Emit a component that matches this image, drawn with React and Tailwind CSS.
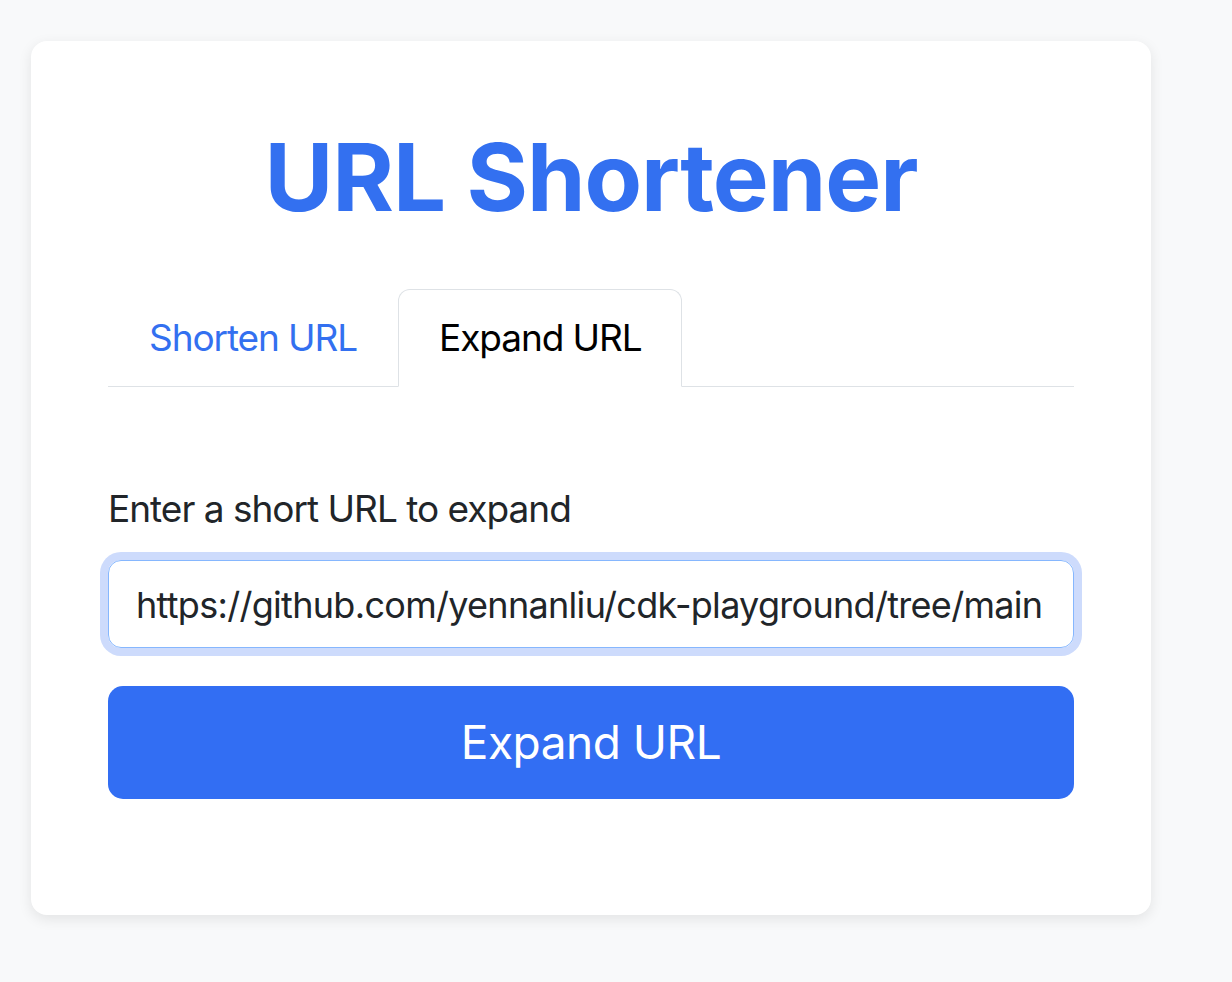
import React, { useEffect, useRef, useState } from "react";

function App() {
  const [tab, setTab] = useState("expand");
  const [url, setUrl] = useState("https://github.com/yennanliu/cdk-playground/tree/main");
  const inputRef = useRef(null);

  // focus the field and put the caret after the text
  useEffect(() => {
    const el = inputRef.current;
    if (!el) return;
    el.focus();
    el.setSelectionRange(el.value.length, el.value.length);
  }, []);

  return (
    <div className="min-h-screen bg-[#f8f9fa] pt-[41px] pl-[31px] font-['Inter','Noto_Sans',sans-serif]">
      <div className="w-[1120px] h-[874px] bg-white rounded-[16px] shadow-[0_4px_14px_rgba(0,0,0,0.09)] px-[77px] pt-[80px]">
        {/* Title */}
        <h1 className="text-center text-[94px] leading-[1.2] font-bold text-[#3370f0] tracking-[-1px]">
          URL Shortener
        </h1>

        {/* Tabs */}
        <div className="mt-[55px] flex border-b border-[#dee2e6]">
          <button
            className={
              tab === "shorten"
                ? "-mb-px px-[40px] py-[18px] text-[37px] leading-[60px] tracking-[-1.1px] border border-[#dee2e6] border-b-white rounded-t-[12px] bg-white text-black"
                : "-mb-px px-[40px] py-[18px] text-[37px] leading-[60px] tracking-[-1.1px] border border-transparent text-[#3370f0]"
            }
            onClick={() => setTab("shorten")}
          >
            Shorten URL
          </button>
          <button
            className={
              tab === "expand"
                ? "-mb-px px-[40px] py-[18px] text-[37px] leading-[60px] tracking-[-1.1px] border border-[#dee2e6] border-b-white rounded-t-[12px] bg-white text-black"
                : "-mb-px px-[40px] py-[18px] text-[37px] leading-[60px] tracking-[-1.1px] border border-transparent text-[#3370f0]"
            }
            onClick={() => setTab("expand")}
          >
            {"Expand URL"}
          </button>
        </div>

        {/* Form */}
        <div className="mt-[93px]">
          <label className="block text-[37px] leading-[58px] tracking-[-1px] text-[#212529]">
            {tab === "expand" ? "Enter a short URL to expand" : "Enter a long URL to shorten"}
          </label>
          <input
            ref={inputRef}
            value={url}
            onChange={(e) => setUrl(e.target.value)}
            className="mt-[22px] block w-full h-[88px] pl-[27px] pr-[20px] pt-[3px] text-[36px] tracking-[-0.7px] text-[#212529] border border-[#86b7fe] rounded-[13px] outline-none ring-8 ring-[#cddbfc] caret-black"
          />
          <button className="mt-[38px] w-full h-[113px] rounded-[15px] bg-[#326ef3] text-white text-[46px] tracking-[-0.5px]">
            {tab === "expand" ? "Expand URL" : "Shorten URL"}
          </button>
        </div>
      </div>
    </div>
  );
}

export default App;
